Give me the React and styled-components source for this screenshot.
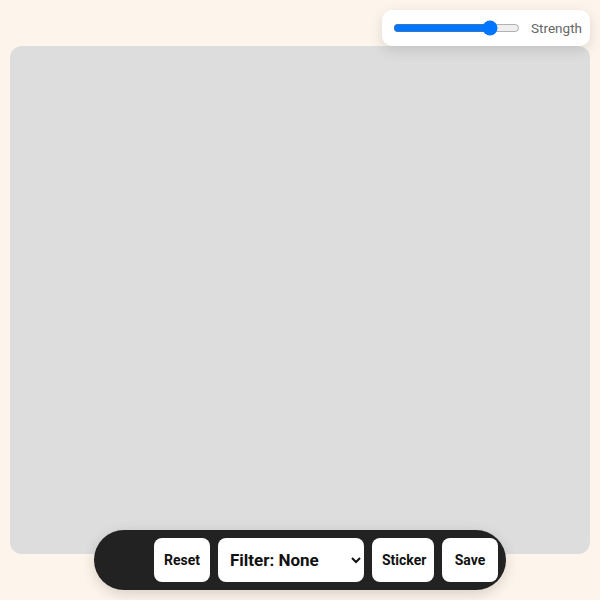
import React, { useState } from "react";
import styled, { createGlobalStyle } from "styled-components";

const GlobalStyle = createGlobalStyle`
  html, body {
    margin: 0;
    padding: 0;
    background: #fdf4eb;
    font-family: Roboto, "Liberation Sans", sans-serif;
  }
`;

const Page = styled.div`
  position: relative;
  width: 600px;
  height: 600px;
  padding: 46px 10px 46px;
  box-sizing: border-box;
`;

const Canvas = styled.div`
  width: 100%;
  height: 508px;
  background: #dddddd;
  border-radius: 12px;
`;

const StrengthPanel = styled.div`
  position: absolute;
  top: 10px;
  right: 10px;
  height: 36px;
  box-sizing: border-box;
  display: flex;
  align-items: center;
  gap: 9px;
  padding: 0 8px 0 9px;
  background: #fff;
  border-radius: 10px;
  box-shadow: 0 4px 14px rgba(0, 0, 0, 0.12);
`;

const Range = styled.input`
  width: 127px;
  margin: 2px;
  accent-color: #0075ff;
`;

const Label = styled.span`
  font-size: 13.5px;
  color: #666;
`;

const Toolbar = styled.div`
  position: absolute;
  left: 50%;
  bottom: 10px;
  transform: translateX(-50%);
  height: 60px;
  box-sizing: border-box;
  display: flex;
  align-items: center;
  gap: 8px;
  padding: 0 8px 0 60px;
  background: #222;
  border-radius: 30px;
  box-shadow: 0 4px 14px rgba(0, 0, 0, 0.15);
`;

const Button = styled.button`
  height: 44px;
  padding: 0 10px;
  border: none;
  border-radius: 8px;
  background: #fff;
  color: #111;
  font-family: Roboto, "Liberation Sans", sans-serif;
  font-size: 14px;
  font-weight: 700;
`;

const Select = styled.select`
  width: 146px;
  height: 44px;
  padding: 0 6px 0 8px;
  border: none;
  border-radius: 8px;
  background: #fff;
  color: #111;
  font-family: Roboto, "Liberation Sans", sans-serif;
  font-size: 17px;
  font-weight: 700;
  outline: none;
`;

export default function App() {
  const [strength, setStrength] = useState(80);
  const [filter, setFilter] = useState("none");

  return (
    <Page>
      <GlobalStyle />
      <Canvas />
      <StrengthPanel>
        <Range
          type="range"
          min="0"
          max="100"
          value={strength}
          onChange={(e) => setStrength(e.target.value)}
        />
        <Label>Strength</Label>
      </StrengthPanel>
      <Toolbar>
        <Button style={{ width: 56 }}>Reset</Button>
        <Select value={filter} onChange={(e) => setFilter(e.target.value)}>
          <option value="none">Filter: None</option>
          <option value="gray">Filter: Grayscale</option>
          <option value="sepia">Filter: Sepia</option>
        </Select>
        <Button style={{ width: 62 }}>Sticker</Button>
        <Button style={{ width: 56 }}>Save</Button>
      </Toolbar>
    </Page>
  );
}
